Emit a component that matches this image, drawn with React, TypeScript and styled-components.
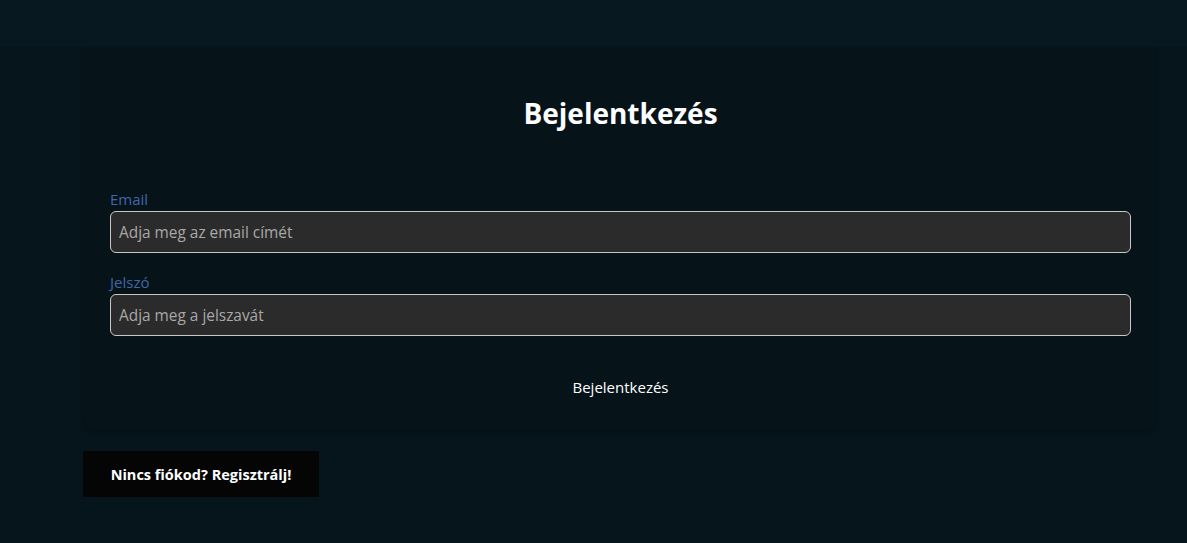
import React from "react";
import styled, { createGlobalStyle } from "styled-components";

const Global = createGlobalStyle`
  html, body { margin: 0; padding: 0; background: #06141b; }
  body { font-family: "Open Sans", "Noto Sans", sans-serif; color: #fff; }
  * { box-sizing: border-box; }
`;

const Page = styled.div`
  min-height: 543px;
  background: #06141b;
`;

const TopBar = styled.div`
  height: 47px;
  background: #071820;
`;

const Main = styled.main`
  padding: 0 32px 0 84px;
`;

const Card = styled.form`
  background: #06141a;
  border-radius: 0 0 8px 8px;
  box-shadow: 0 2px 5px rgba(0, 0, 0, 0.2);
  padding: 48px 24px 25px 26px;
  display: flex;
  flex-direction: column;
`;

const Title = styled.h1`
  margin: 0 0 58px;
  text-align: center;
  font-size: 28px;
  font-weight: 700;
  color: #fff;
  line-height: 36px;
`;

const Field = styled.div`
  display: flex;
  flex-direction: column;
  gap: 1px;
  margin-bottom: 19px;
`;

const Label = styled.label`
  font-size: 15px;
  line-height: 21px;
  color: #4266a8;
`;

const Input = styled.input`
  height: 42px;
  background: #2b2b2b;
  border: 1px solid #c8c8c8;
  border-radius: 6px;
  padding: 0 8px;
  font-family: inherit;
  font-size: 15.4px;
  color: #ddd;
  outline: none;
  &::placeholder { color: #a8a8a8; }
`;

const Submit = styled.button`
  align-self: center;
  margin-top: 14px;
  background: transparent;
  border: none;
  color: #fff;
  font-family: inherit;
  font-size: 15px;
  padding: 8px 16px;
  cursor: pointer;
`;

const RegisterLink = styled.a`
  display: inline-flex;
  align-items: center;
  justify-content: center;
  margin-top: 21px;
  margin-left: -1px;
  width: 236px;
  height: 46px;
  background: #050505;
  color: #fff;
  font-weight: 700;
  font-size: 14.5px;
  text-decoration: none;
`;

export default function App() {
  return (
    <Page>
      <Global />
      <TopBar />
      <Main>
        <Card onSubmit={(e) => e.preventDefault()}>
          <Title>Bejelentkezés</Title>
          <Field>
            <Label htmlFor="email">Email</Label>
            <Input id="email" type="email" placeholder="Adja meg az email címét" />
          </Field>
          <Field>
            <Label htmlFor="pw">Jelszó</Label>
            <Input id="pw" type="password" placeholder="Adja meg a jelszavát" />
          </Field>
          <Submit type="submit">Bejelentkezés</Submit>
        </Card>
        <RegisterLink href="#">Nincs fiókod? Regisztrálj!</RegisterLink>
      </Main>
    </Page>
  );
}
